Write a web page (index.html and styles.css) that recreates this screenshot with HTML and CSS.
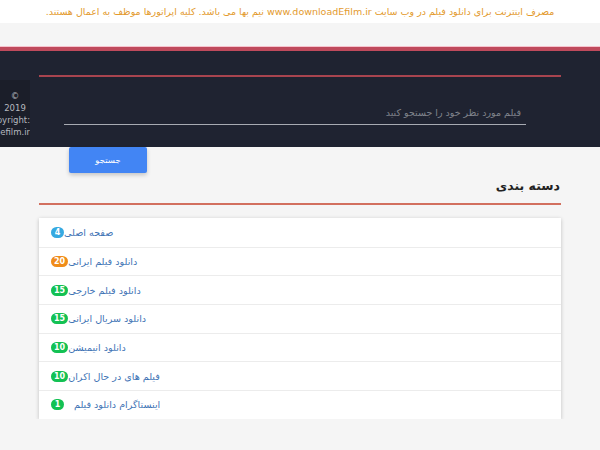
FILE: index.html
```html
<!DOCTYPE html>
<html lang="fa" dir="rtl">
<head>
  <meta charset="UTF-8">
  <meta name="viewport" content="width=device-width, initial-scale=1">
  <title>دانلود فیلم</title>
  <link rel="stylesheet" href="styles.css">
</head>
<body>
  <div class="notice">مصرف اینترنت برای دانلود فیلم در وب سایت www.downloadEfilm.ir نیم بها می باشد. کلیه اپراتورها موظف به اعمال هستند.</div>
  <div class="spacer"></div>
  <header class="top">
    <div class="copy">
      <div><bdi dir="ltr">©</bdi></div>
      <div><bdi dir="ltr">2019</bdi></div>
      <div><bdi dir="ltr">Copyright:</bdi></div>
      <div><bdi dir="ltr">downloadefilm.ir</bdi></div>
    </div>
    <div class="top-inner">
      <div class="top-line"></div>
      <form class="search">
        <input type="text" placeholder="فیلم مورد نظر خود را جستجو کنید">
      </form>
    </div>
  </header>
  <main class="main">
    <div class="btn-row">
      <button type="button" class="btn">جستجو</button>
    </div>
    <h2 class="title">دسته بندی</h2>
    <ul class="cats">
      <li><span class="badge info">4</span><a href="#">صفحه اصلی</a></li>
      <li><span class="badge warn">20</span><a href="#">دانلود فیلم ایرانی</a></li>
      <li><span class="badge ok">15</span><a href="#">دانلود فیلم خارجی</a></li>
      <li><span class="badge ok">15</span><a href="#">دانلود سریال ایرانی</a></li>
      <li><span class="badge ok">10</span><a href="#">دانلود انیمیشن</a></li>
      <li><span class="badge ok">10</span><a href="#">فیلم های در حال اکران</a></li>
      <li><span class="badge ok">1</span><a href="#" class="sp">اینستاگرام دانلود فیلم</a></li>
    </ul>
  </main>
</body>
</html>
```

FILE: styles.css
```css
:root { --navy: #1f2331; --red: #bf4a5c; --blue: #4285f4; --link: #3f74b5; }
* { box-sizing: border-box; }
body { margin:0; background:#f5f5f5; font-family:"DejaVu Sans", sans-serif; color:#333; }
.notice { background:#fff; height:23px; line-height:23px; text-align:center;
  font-size:9.5px; color:#e39a2d; white-space:nowrap; }
.spacer { height:24px; border-bottom:1px solid #f6c3cd; }
.top { direction:ltr; display:flex; height:100px; background:var(--navy);
  border-top:4px solid var(--red); }
.copy { width:30px; margin-top:29px; background:#1b1e29; overflow:hidden;
  direction:rtl; text-align:center; padding-top:10px;
  font-size:8.5px; line-height:12px; color:#b5b8bf; white-space:nowrap; }
.top-inner { flex:1; margin:0 39px 0 9px; }
.top-line { height:2px; margin-top:24px; background:#a8444f; }
.search { padding:0 35px 0 25px; margin-top:24px; }
.search input { display:block; width:100%; direction:rtl; background:transparent; border:none;
  border-bottom:1px solid #a7aab2; padding:0 5px; height:24px;
  font-family:inherit; font-size:9.5px; color:#ddd; outline:none; }
.search input::placeholder { color:#80838c; }
.main { width:522px; margin:0 auto; }
.btn-row { direction:ltr; padding-left:30px; }
.btn { width:78px; height:26px; background:var(--blue); color:#fff; border:none;
  border-radius:2px; font-family:inherit; font-size:8.5px;
  box-shadow:0 2px 4px rgba(0,0,0,0.2); }
.title { margin:0; padding:5px 1px 9px; font-size:12.5px; font-weight:bold; color:#222; line-height:16px;
  border-bottom:2px solid #d2705f; }
.cats { direction:ltr; list-style:none; margin:13px 0 0; padding:0; background:#fff;
  box-shadow:0 1px 4px rgba(0,0,0,0.22); }
.cats li { display:flex; align-items:center; height:28.7px; padding-left:12px;
  border-top:1px solid #ececec; }
.cats li:first-child { border-top:none; }
.cats a { color:var(--link); text-decoration:none; font-size:9.6px; }
.cats a.sp { margin-left:10px; }
.badge { display:inline-block; padding:0 3px; min-width:13px; height:11px; line-height:11px;
  border-radius:6px; color:#fff; font-size:8px; font-weight:bold; text-align:center; }
.badge.info { background:#36a9e1; }
.badge.warn { background:#f08c1a; }
.badge.ok { background:#13c153; }
```
